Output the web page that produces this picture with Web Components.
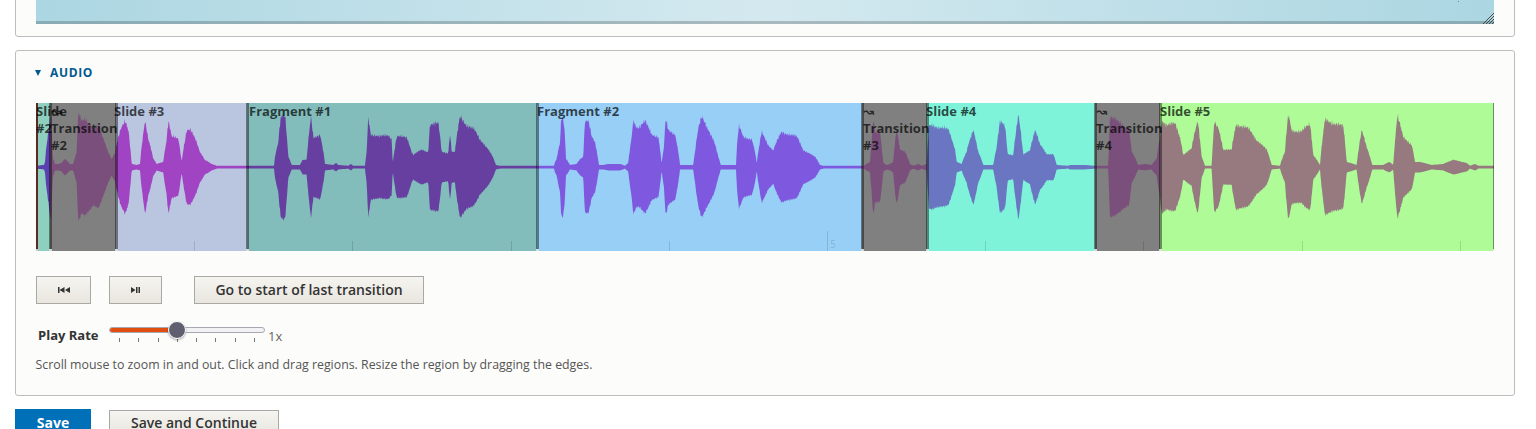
<!DOCTYPE html>
<html lang="en">
<head>
<meta charset="utf-8">
<title>Audio</title>
<style>
  html, body { margin: 0; height: 429px; overflow: hidden; background: #fff; }
  body { padding: 0 21px 0 15px; font-family: "Open Sans", "Noto Sans", sans-serif; color: #333; box-sizing: border-box; }
</style>
</head>
<body>
  <preview-card></preview-card>
  <audio-card>
    <wave-editor>
      <wave-region grow="14" color="#8fcfbf" wave="#5a3fb0" edge-left="#5a2a20" offset="0">Slide #2</wave-region>
      <wave-region grow="66" color="#808080" wave="#7b4f7b" offset="1">↝ Transition #2</wave-region>
      <wave-region grow="131" color="#bac5e0" wave="#a044c4" offset="-2">Slide #3</wave-region>
      <wave-region grow="290" color="#82bcbb" wave="#663fa0" offset="2">Fragment #1</wave-region>
      <wave-region grow="325" color="#98cff6" wave="#7e58de" offset="0">Fragment #2</wave-region>
      <wave-region grow="65" color="#808080" wave="#7b4f7b" offset="1">↝ Transition #3</wave-region>
      <wave-region grow="168" color="#7ff3d9" wave="#6a76c2" offset="-1">Slide #4</wave-region>
      <wave-region grow="65" color="#808080" wave="#7b4f7b" offset="1">↝ Transition #4</wave-region>
      <wave-region grow="334" color="#aefb98" wave="#967a80" offset="0">Slide #5</wave-region>
    </wave-editor>
    <transport-bar></transport-bar>
    <rate-slider></rate-slider>
    <p-help>Scroll mouse to zoom in and out. Click and drag regions. Resize the region by dragging the edges.</p-help>
  </audio-card>
  <form-actions></form-actions>

<script>
// envelope of the recording: [page x, amplitude from the centre line]
const ENVELOPE = [
  [36,1.2],[44,2],[45,5],[47,25],[48.5,35],[50,50],[51,52],[51.5,50],[52,30],[52.7,10],[55,3],[58.3,3],[61.7,4],[65,8],[70,3],[73.3,3],[76.7,15],[78.3,53],[81.7,45],[85,48],[90,43],[93.3,38],[98.3,40],[103.3,28],[108.3,15],[111.7,8],[115,14],[120,35],[125,47],[128.3,38],[131.7,3],[136.7,2],[140,3],[145,47],[148.3,28],[153.3,8],[156.7,3],[163.3,5],[166.7,28],[168.3,46],[171.7,30],[178.3,28],[181.7,5],[186.7,37],[190,37],[195,28],[200,15],[205,7],[211.7,3],[216.7,1.2],
  [274,1.2],[275,10],[278.3,25],[280.7,50],[283.3,52],[285,50],[288.3,10],[291.7,2],[300,2],[302.7,7],[306.7,7],[309.3,35],[311,50],[313.3,30],[320,32],[323.3,15],[325,3],[333.3,2],[336,4],[338.3,2],[348.3,1.2],[351,3],[353,1.2],[365,1.2],[366.7,15],[368.3,50],[370.7,33],[380,30],[388.3,32],[391.7,28],[392.7,3],[396.7,30],[406.7,30],[411.7,15],[413.3,12],[421.7,17],[428.3,15],[430,43],[438.3,43],[441.7,15],[448.3,14],[450,33],[451.7,15],[455,15],[460,50],[466.7,42],[473.3,38],[480,27],[486.7,20],[491.7,12],[496,2],[500,1.2],
  [554,1.2],[555,5],[556.7,8],[560,25],[561,45],[562.3,52],[564.3,40],[566,8],[570,2],[576.7,3],[580,8],[583.3,10],[585,45],[588.3,45],[591.7,30],[595,25],[599,2],[603.3,2],[608.3,3],[620,3],[625,1.2],[628.3,4],[631.7,30],[633.3,47],[636.7,40],[640,40],[645,45],[651.7,33],[658.3,30],[661.7,3],[664,20],[665.7,47],[668.3,37],[675,33],[678.3,15],[680,2],[693.3,2],[695,15],[698.3,38],[701.7,49],[706.7,40],[713.3,28],[718.3,10],[720.7,2],[736,2],[737.3,25],[739,40],[743.3,30],[751.7,28],[755,15],[756.7,3],[760,25],[761.7,35],[768.3,22],[773.3,16],[780,32],[781.7,35],[796.7,30],[803.3,17],[815,10],[820,2],[823.3,1.2],
  [864,1.2],[865,2],[870,5],[871.7,25],[873.3,47],[875,35],[880,35],[883.3,4],[886.7,2],[890,3],[893.3,5],[895,25],[896.7,37],[900,18],[905,15],[910,3],[913.3,1.2],[918.3,3],[921.7,1.2],[926.7,3],[929,40],[931.7,42],[948.3,37],[955,18],[956.7,5],[961.7,3],[966.7,15],[973.3,38],[978.3,15],[983.3,2],[993.3,2],[996.7,20],[1000,45],[1005,40],[1007.7,13],[1013.3,12],[1018.3,52],[1023.3,12],[1030,17],[1035,37],[1040,22],[1046.7,13],[1053.3,13],[1056.7,2],[1068,1.2],[1070,2],[1076.7,2],[1085,2],[1095,1.2],
  [1108.3,1.2],[1110,50],[1118.3,45],[1129,38],[1131.7,15],[1138.3,2],[1145,3],[1151.7,2],[1156.7,8],[1160,30],[1161.7,47],[1166.7,42],[1175,43],[1180,30],[1183.3,12],[1191.7,18],[1197.7,47],[1201.7,10],[1205,1.2],[1211.7,1.2],[1214.3,45],[1218.3,40],[1223.3,17],[1231.7,17],[1236,43],[1248.3,38],[1256.7,27],[1266.7,17],[1271.7,2],[1280,1.2],[1285,15],[1288.3,52],[1291.7,37],[1301.7,35],[1310,43],[1313.3,12],[1320,2],[1325,47],[1336.7,43],[1343.3,40],[1346.7,5],[1356.7,2],[1361.7,36],[1366.7,20],[1372.3,2],[1383.3,2],[1389.3,5],[1393.3,2],[1397.3,50],[1403.3,30],[1411.7,22],[1415,5],[1420,5],[1431.7,2],[1443.3,3],[1453.3,7],[1466.7,4],[1470,1.2],[1475,3],[1478.3,1.2],[1494,1.2]
];

function amplitudeAt(x) {
  for (let i = 1; i < ENVELOPE.length; i++) {
    if (x <= ENVELOPE[i][0]) {
      const [x0, a0] = ENVELOPE[i - 1];
      const [x1, a1] = ENVELOPE[i];
      const t = (x - x0) / (x1 - x0);
      const eased = a1 > a0 ? Math.pow(t, 0.85) : Math.pow(t, 1.15);
      return a0 + (a1 - a0) * eased;
    }
  }
  return 1.2;
}

function wavePath(left, right) {
  const top = [], bottom = [];
  for (let x = left; x <= right; x += 0.5) {
    const a = amplitudeAt(x);
    const noise = Math.sin(x * 12.9) + Math.sin(x * 4.1) + Math.sin(x * 31.7) + Math.sin(x * 47.3);
    const jitter = a > 5 ? noise * a * 0.028 : 0;
    top.push(`${x - left} ${(64 - a - jitter).toFixed(1)}`);
    bottom.unshift(`${x - left} ${(64.4 + a + jitter * 0.6).toFixed(1)}`);
  }
  return 'M' + top.concat(bottom).join('L') + 'Z';
}

const gradientButton = `
  background: linear-gradient(#f5f4f0, #e8e6de);
  border: 1px solid #a8a8a4;
  box-sizing: border-box;
  color: #333;
  font: 600 14px/1 "Open Sans", "Noto Sans", sans-serif;
  display: flex;
  align-items: center;
  justify-content: center;
`;

class PreviewCard extends HTMLElement {
  constructor() {
    super();
    this.attachShadow({ mode: 'open' }).innerHTML = `
      <style>
        :host { display: block; margin-top: -40px; height: 77px; box-sizing: border-box; background: #fcfcfa;
          border: 1px solid #bdbdbd; border-radius: 3px; padding: 0 20px; }
        .shot { height: 63px; box-sizing: border-box; position: relative; display: flex; flex-direction: column; justify-content: flex-end;
          background: linear-gradient(90deg, #abd6e2 0%, #d4e9ef 50%, #abd6e2 100%); }
        .lip { height: 3px; background: rgba(0,0,0,.2); }
        svg { position: absolute; right: 0; bottom: 0; }
        .dot { position: absolute; right: 35px; top: 40px; width: 1px; height: 1px; background: #5b87a8; }
      </style>
      <div class="shot">
        <span class="dot"></span>
        <div class="lip"></div>
        <svg width="11" height="11" viewBox="0 0 11 11" stroke="#4a4a4a" stroke-width="1" fill="none">
          <path d="M0 11L11 0M3 11L11 3M6 11L11 6M9 11L11 9"/>
        </svg>
      </div>`;
  }
}

class AudioCard extends HTMLElement {
  constructor() {
    super();
    this.attachShadow({ mode: 'open' }).innerHTML = `
      <style>
        :host { display: block; margin-top: 13px; height: 346px; box-sizing: border-box; background: #fcfcfa;
          border: 1px solid #bdbdbd; border-radius: 3px; padding: 0 20px; }
        .summary { display: flex; align-items: center; gap: 9px; height: 43px; padding-top: 1px; box-sizing: border-box;
          color: #005a8f; font: 700 12px/1 "Open Sans", sans-serif; letter-spacing: .65px; margin-left: -1px; }
        .tri { width: 0; height: 0; border: solid transparent; border-width: 6px 3px 0; border-top-color: #005a8f; }
        .body { padding-top: 9px; }
      </style>
      <div class="summary"><span class="tri"></span><span>AUDIO</span></div>
      <div class="body"><slot></slot></div>`;
  }
}

class WaveEditor extends HTMLElement {
  constructor() {
    super();
    this.attachShadow({ mode: 'open' }).innerHTML = `
      <style>
        :host { display: flex; position: relative; height: 148px; width: 1458px; }
        svg { position: absolute; left: 0; top: 0; z-index: 1; }
        .ticks { position: absolute; inset: 0; z-index: 1; pointer-events: none; }
        .tick { position: absolute; bottom: 0; width: 1px; height: 10px; background: rgba(0,0,0,.13); }
        .tick.major { height: 20px; }
        .num { position: absolute; bottom: 2px; font: 10px/1 "Open Sans", sans-serif; color: rgba(0,0,0,.16); }
      </style>
      <slot></slot>
      <svg width="1458" height="148" viewBox="0 0 1458 148"></svg>
      <div class="ticks"></div>`;
  }
  connectedCallback() {
    const svg = this.shadowRoot.querySelector('svg');
    const left = 36;
    const ns = svg.namespaceURI;
    const clip = document.createElementNS(ns, 'clipPath');
    clip.id = 'env';
    const shape = document.createElementNS(ns, 'path');
    shape.setAttribute('d', wavePath(left, left + 1458));
    clip.appendChild(shape);
    svg.appendChild(clip);
    let x = 0;
    this.querySelectorAll('wave-region').forEach((r) => {
      const w = Number(r.getAttribute('grow'));
      const rect = document.createElementNS(ns, 'rect');
      rect.setAttribute('x', x);
      rect.setAttribute('y', 0);
      rect.setAttribute('width', w);
      rect.setAttribute('height', 148);
      rect.setAttribute('fill', r.getAttribute('wave'));
      rect.setAttribute('clip-path', 'url(#env)');
      svg.appendChild(rect);
      x += w;
    });
    const ticks = this.shadowRoot.querySelector('.ticks');
    for (let i = 1; i <= 9; i++) {
      const t = document.createElement('div');
      t.className = i === 5 ? 'tick major' : 'tick';
      t.style.left = Math.round(158.2 * i) + 'px';
      ticks.appendChild(t);
    }
    const num = document.createElement('div');
    num.className = 'num';
    num.textContent = '5';
    num.style.left = '794px';
    ticks.appendChild(num);
  }
}

class WaveRegion extends HTMLElement {
  constructor() {
    super();
    this.attachShadow({ mode: 'open' }).innerHTML = `
      <style>
        :host { display: block; position: relative; flex: none; box-sizing: border-box; }
        .label { position: relative; z-index: 2; display: block; font: 700 13px/17px "Open Sans", "DejaVu Sans", sans-serif;
          color: rgba(0,0,0,.7); }
        .edge { position: absolute; top: 0; bottom: 0; width: 1.5px; background: rgba(0,0,0,.42); z-index: 2; }
        .edge::after { content: ""; position: absolute; left: 0; right: 0; bottom: 0; height: 2px; background: rgba(255,255,255,.75); }
        .edge.l { left: 0; }
        .edge.r { right: 0; }
      </style>
      <span class="edge l"></span>
      <span class="edge r"></span>
      <span class="label"><slot></slot></span>`;
  }
  connectedCallback() {
    const w = Number(this.getAttribute('grow'));
    this.style.width = w + 'px';
    this.style.background = this.getAttribute('color');
    const label = this.shadowRoot.querySelector('.label');
    label.style.marginLeft = this.getAttribute('offset') + 'px';
    if (this.hasAttribute('edge-left')) {
      this.shadowRoot.querySelector('.edge.l').style.background = this.getAttribute('edge-left');
    }
  }
}

class TransportBar extends HTMLElement {
  constructor() {
    super();
    this.attachShadow({ mode: 'open' }).innerHTML = `
      <style>
        :host { display: flex; margin-top: 25px; height: 28px; }
        button { ${gradientButton} padding: 0; }
        .back { width: 55px; margin-right: 18px; }
        .next { width: 53px; margin-right: 32px; }
        .last { width: 230px; }
      </style>
      <button class="back" aria-label="Previous">
        <svg width="12" height="6" viewBox="0 0 12 6" fill="#333"><path d="M0 0h1.5v6H0zM6.5 0v6L1.5 3zM12 0v6L7 3z"/></svg>
      </button>
      <button class="next" aria-label="Next">
        <svg width="9" height="6" viewBox="0 0 9 6" fill="#333"><path d="M0 0l4.5 3L0 6zM5 0h1.5v6H5zM7.5 0H9v6H7.5z"/></svg>
      </button>
      <button class="last">Go to start of last transition</button>`;
  }
}

class RateSlider extends HTMLElement {
  constructor() {
    super();
    this.attachShadow({ mode: 'open' }).innerHTML = `
      <style>
        :host { display: flex; margin-top: 21px; height: 24px; position: relative; font-family: "Open Sans", sans-serif; }
        .name { width: 73px; padding-left: 2px; box-sizing: border-box; font-weight: 700; font-size: 13px; line-height: 20px; color: #333; }
        .track-wrap { position: relative; width: 156px; }
        .track { height: 6px; margin-top: 2px; box-sizing: border-box; border: 1px solid #a8a8b4; border-radius: 3px; background: #f2f2f4; position: relative; overflow: hidden; }
        .fill { position: absolute; left: -1px; top: -1px; bottom: -1px; width: 68px; background: #e04e10; }
        .knob { position: absolute; left: 59px; top: -4px; width: 18px; height: 18px; border-radius: 50%; background: #5f5f70;
          border: 1px solid #fff; box-sizing: border-box; box-shadow: 0 1px 2px rgba(0,0,0,.35); }
        .marks { display: flex; justify-content: space-between; padding: 0 10px; margin-top: 5px; }
        .marks i { width: 1px; height: 4px; background: #777; }
        .val { margin-left: 3px; font-size: 13px; line-height: 20px; margin-top: 1px; color: #666; }
      </style>
      <div class="name">Play Rate</div>
      <div class="track-wrap">
        <div class="track"><div class="fill"></div></div>
        <div class="knob"></div>
        <div class="marks"><i></i><i></i><i></i><i></i><i></i><i></i><i></i><i></i></div>
      </div>
      <div class="val">1x</div>`;
  }
}

class PHelp extends HTMLElement {
  constructor() {
    super();
    this.attachShadow({ mode: 'open' }).innerHTML = `
      <style>
        :host { display: block; margin-top: 7px; font: 12.35px/18px "Open Sans", sans-serif; color: #555; margin-left: -0.5px; }
      </style>
      <slot></slot>`;
  }
}

class FormActions extends HTMLElement {
  constructor() {
    super();
    this.attachShadow({ mode: 'open' }).innerHTML = `
      <style>
        :host { display: flex; margin-top: 13px; align-items: flex-start; }
        button { ${gradientButton} padding: 0; height: 28px; }
        .save { width: 76px; background: #0071b8; border: 0; color: #fff; font-weight: 700; margin-right: 18px; }
        .more { width: 170px; margin-top: 1px; height: 26px; }
      </style>
      <button class="save">Save</button>
      <button class="more">Save and Continue</button>`;
  }
}

customElements.define('preview-card', PreviewCard);
customElements.define('audio-card', AudioCard);
customElements.define('wave-region', WaveRegion);
customElements.define('wave-editor', WaveEditor);
customElements.define('transport-bar', TransportBar);
customElements.define('rate-slider', RateSlider);
customElements.define('p-help', PHelp);
customElements.define('form-actions', FormActions);
</script>
</body>
</html>
